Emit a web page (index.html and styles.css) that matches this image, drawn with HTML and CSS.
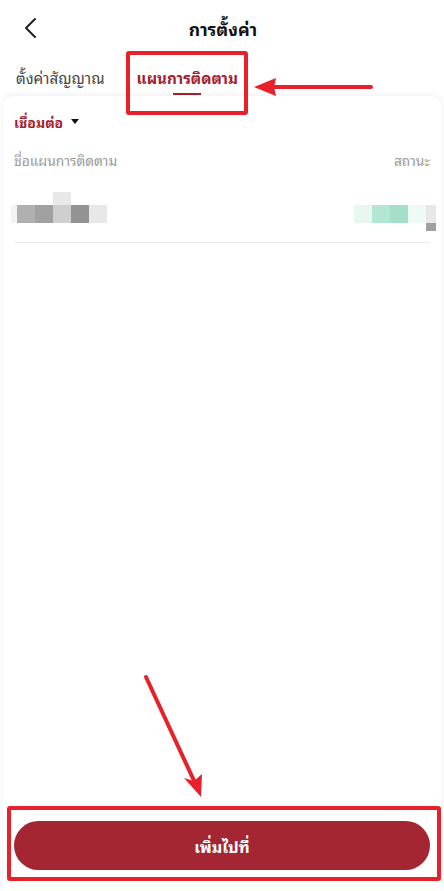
FILE: index.html
```html
<!DOCTYPE html>
<html lang="th">
<head>
<meta charset="utf-8">
<link rel="stylesheet" href="styles.css">
</head>
<body>
<div class="page">
  <header class="topbar">
    <svg class="back" width="14" height="22" viewBox="0 0 14 22"><path d="M11 2 L2 11 L11 20" fill="none" stroke="#222" stroke-width="2" stroke-linecap="round" stroke-linejoin="round"/></svg>
    <h1 class="title">การตั้งค่า</h1>
  </header>
  <nav class="tabs">
    <div class="tab">ตั้งค่าสัญญาณ</div>
    <div class="tab active">แผนการติดตาม<span class="ink"></span></div>
  </nav>
  <main class="card">
    <div class="filter">เชื่อมต่อ <span class="caret"></span></div>
    <div class="cols"><span>ชื่อแผนการติดตาม</span><span>สถานะ</span></div>
    <div class="row">
      <div class="blur left">
        <i class="px" style="background:#f4f4f4;width:6px"></i><i class="px" style="background:#b0b0b0"></i><i class="px" style="background:#a1a1a1"></i><i class="px tall" style="background:#cfcfcf"></i><i class="px" style="background:#939393"></i><i class="px" style="background:#e8e8e8"></i>
      </div>
      <div class="blur right">
        <i class="px" style="background:#e8f7f0"></i><i class="px" style="background:#b3e6d3"></i><i class="px" style="background:#a6dfc9"></i><i class="px" style="background:#eefaf5"></i><i class="px tail" style="background:#e8e8e8;width:10px"></i>
      </div>
    </div>
    <div class="spacer"></div>
    <div class="footer">
      <button class="add">เพิ่มไปที่</button>
    </div>
  </main>
  <div class="mark mark-tab"></div>
  <div class="mark mark-btn"></div>
  <svg class="arrows" width="444" height="891" viewBox="0 0 444 891">
    <g stroke="#e8202a" stroke-width="4" stroke-linecap="round" fill="none">
      <line x1="371" y1="87" x2="268" y2="87"/>
      <line x1="146" y1="677" x2="196" y2="785"/>
    </g>
    <g fill="#e8202a">
      <polygon points="254,87 276,78 274,87 276,96"/>
      <polygon points="201,797 184,778 194,781 202,774"/>
    </g>
  </svg>
</div>
</body>
</html>
```
FILE: styles.css
```css
* { box-sizing: border-box; }
html, body { margin: 0; padding: 0; background: #fff; }
body {
  font-family: "Noto Sans Thai Looped", "Noto Sans Thai UI", "Loma", "Garuda", "Tahoma", "Sarabun", "Noto Sans Thai", "Noto Sans", sans-serif;
  color: #222;
}
.page {
  position: relative;
  width: 444px;
  height: 891px;
  display: flex;
  flex-direction: column;
  overflow: hidden;
}
.topbar {
  height: 56px;
  display: flex;
  align-items: center;
  justify-content: center;
  position: relative;
}
.back { position: absolute; left: 24px; top: 17px; }
.title {
  margin: 0 0 0 2px;
  font-size: 17.5px;
  font-weight: 700;
  color: #111;
}
.tabs {
  display: flex;
  align-items: flex-start;
  gap: 32px;
  padding: 6px 0 0 16px;
  height: 40px;
}
.tab {
  font-size: 15.2px;
  color: #444;
  line-height: 30px;
  position: relative;
}
.tab.active {
  color: #a3212f;
  font-weight: 700;
}
.ink {
  position: absolute;
  left: 50%;
  margin-left: -14px;
  top: 31px;
  width: 28px;
  height: 2px;
  background: #a3212f;
}
.card {
  flex: 1;
  margin: 0 3px;
  background: #fff;
  border-radius: 10px 10px 0 0;
  box-shadow: 0 -1px 6px rgba(0,0,0,0.07);
  display: flex;
  flex-direction: column;
  padding: 10px 11px 0;
}
.filter {
  font-size: 14px;
  font-weight: 700;
  color: #a3212f;
  display: flex;
  align-items: center;
  gap: 4px;
  height: 30px;
}
.caret {
  width: 0; height: 0;
  border-left: 4px solid transparent;
  border-right: 4px solid transparent;
  border-top: 5px solid #111;
  margin-left: 4px;
}
.cols {
  display: flex;
  justify-content: space-between;
  font-size: 13.8px;
  color: #999;
  margin-top: 13px;
  height: 22px;
  line-height: 22px;
}
.row {
  display: flex;
  justify-content: space-between;
  align-items: flex-start;
  height: 72px;
  padding-top: 21px;
  border-bottom: 1px solid #eee;
}
.blur { display: flex; align-items: flex-start; }
.px {
  display: block;
  width: 18px;
  height: 18px;
  margin-top: 13px;
}
.px.tall { box-shadow: 0 -13px 0 0 #e8e8e8; }
.px.tail { box-shadow: 0 8px 0 0 #a0a0a0; }
.left { margin-left: -3px; }
.right { margin-right: -6px; }
.spacer { flex: 1; }
.footer {
  padding: 0 0 21px;
}
.add {
  display: block;
  width: 100%;
  height: 49px;
  border: 0;
  border-radius: 25px;
  background: #a32632;
  color: #fff;
  font-family: inherit;
  font-size: 16px;
  font-weight: 700;
}
.mark {
  position: absolute;
  border: 4px solid #e8202a;
  border-radius: 3px;
}
.mark-tab { left: 126px; top: 51px; width: 122px; height: 64px; }
.mark-btn { left: 7px; top: 806px; width: 434px; height: 75px; }
.arrows { position: absolute; left: 0; top: 0; }
```
